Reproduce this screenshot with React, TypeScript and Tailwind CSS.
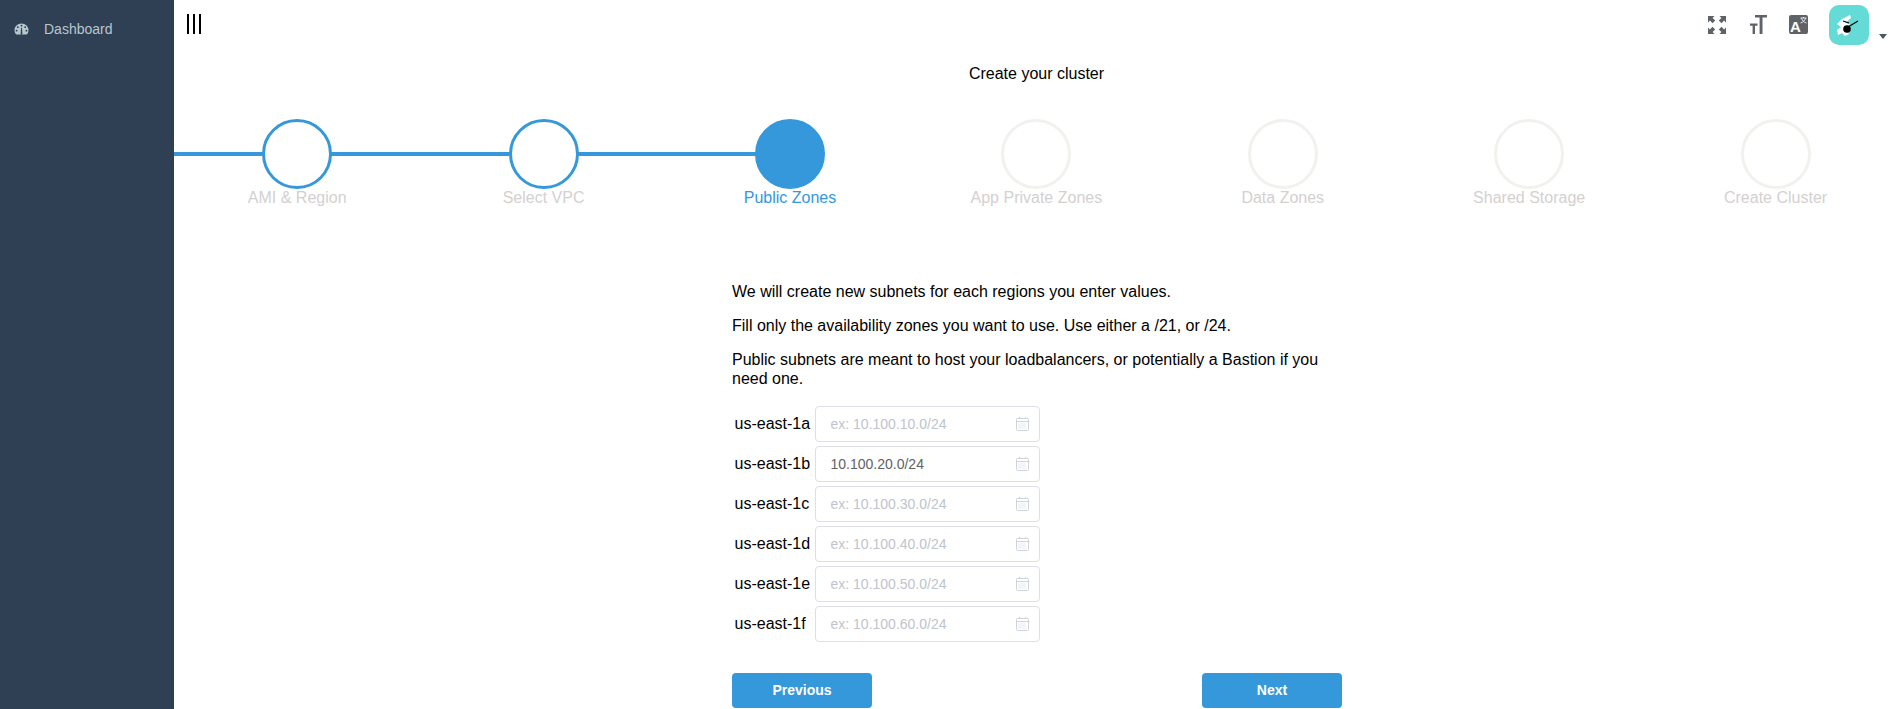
import React from 'react';

const steps = [
  { label: 'AMI & Region', state: 'done' },
  { label: 'Select VPC', state: 'done' },
  { label: 'Public Zones', state: 'active' },
  { label: 'App Private Zones', state: 'todo' },
  { label: 'Data Zones', state: 'todo' },
  { label: 'Shared Storage', state: 'todo' },
  { label: 'Create Cluster', state: 'todo' },
];

const zones = [
  { name: 'us-east-1a', placeholder: 'ex: 10.100.10.0/24', value: '' },
  { name: 'us-east-1b', placeholder: 'ex: 10.100.20.0/24', value: '10.100.20.0/24' },
  { name: 'us-east-1c', placeholder: 'ex: 10.100.30.0/24', value: '' },
  { name: 'us-east-1d', placeholder: 'ex: 10.100.40.0/24', value: '' },
  { name: 'us-east-1e', placeholder: 'ex: 10.100.50.0/24', value: '' },
  { name: 'us-east-1f', placeholder: 'ex: 10.100.60.0/24', value: '' },
];

function GaugeIcon() {
  return (
    <svg width="15" height="12" viewBox="0 0 15 12.5" preserveAspectRatio="none" className="fill-[#b8c7ce]">
      <path d="M7.5 0.5C3.5 0.5 0.5 3.6 0.5 7.5c0 1.5.4 2.8 1.2 4 .2.3.5.5.9.5h9.800c.4 0 .7-.2.9-.5.8-1.2 1.2-2.5 1.2-4 0-3.9-3-7-7-7z" />
      <circle cx="7.5" cy="2.8" r="0.9" fill="#2f4054" />
      <circle cx="3.8" cy="4.4" r="0.9" fill="#2f4054" />
      <circle cx="11.2" cy="4.4" r="0.9" fill="#2f4054" />
      <circle cx="2.6" cy="8" r="0.9" fill="#2f4054" />
      <circle cx="12.4" cy="8" r="0.9" fill="#2f4054" />
      <path d="M6.6 12l.4-7h1l.4 7z" fill="#2f4054" />
    </svg>
  );
}

function CalendarIcon() {
  return (
    <svg width="13" height="14" viewBox="0 0 13 14" fill="none" stroke="#cfd3dc" strokeWidth="1">
      <rect x="0.5" y="1.5" width="12" height="12" rx="1" />
      <path d="M0.5 4.5h12" />
      <path d="M3.5 0v2M9.5 0v2" />
      <path d="M2.5 7h8M2.5 9h8M2.5 11h8" strokeDasharray="1 1" />
    </svg>
  );
}

function FullscreenIcon() {
  return (
    <svg width="18" height="18" viewBox="0 0 18 18" className="fill-[#5f6368]">
      <path d="M0 0h6.5L4.6 1.9l2.6 2.6-2.7 2.7-2.6-2.6L0 6.5z" />
      <path d="M18 0h-6.5l1.9 1.9-2.6 2.6 2.7 2.7 2.6-2.6L18 6.5z" />
      <path d="M0 18h6.5l-1.9-1.9 2.6-2.6-2.7-2.7-2.6 2.6L0 11.5z" />
      <path d="M18 18h-6.5l1.9-1.9-2.6-2.6 2.7-2.7 2.6 2.6 1.9-1.9z" />
    </svg>
  );
}

function TextSizeIcon() {
  return (
    <svg width="17" height="19" viewBox="0 0 17 19" className="fill-[#5f6368]">
      <path d="M5 0h12v2.6h-4.5V19H9.600V2.600H5z" />
      <path d="M0 8.500h7.500v2.200H5V19H2.600v-8.300H0z" />
    </svg>
  );
}

function TranslateIcon() {
  return (
    <svg width="19" height="19" viewBox="0 0 19 19">
      <rect width="19" height="19" rx="2" fill="#5f6368" />
      <text x="1" y="17" fontSize="15" fontWeight="700" fill="#fff" fontFamily="Liberation Sans, sans-serif">A</text>
      <path d="M11.5 3h6M14.5 2v1M12.5 3c.5 2.5 2.5 4.5 5 5M16.5 3c-.5 2.5-2.5 4.5-5 5" stroke="#fff" strokeWidth="0.8" fill="none" />
    </svg>
  );
}

function AvatarLogo() {
  return (
    <svg width="40" height="40" viewBox="0 0 40 40">
      <path d="M21 10l-8 4-5 5 4 3-4 3 1 5 4-2 3 3 4-2-2-5 3-5-5-1 6-5z" fill="#fff" />
      <circle cx="18" cy="24" r="3.800" fill="#000" />
      <path d="M14 16l6 2M19 22l10-6" stroke="#000" strokeWidth="1.300" />
    </svg>
  );
}

function Step({ label, state }: { label: string; state: string }) {
  const circle =
    state === 'active'
      ? 'bg-[#3498db] border-[#3498db]'
      : state === 'done'
        ? 'bg-white border-[#3498db]'
        : 'bg-white border-[#f2f1ed]';
  return (
    <div className="relative flex w-[246.4px] shrink-0 flex-col items-center">
      <div className={`z-10 h-[70px] w-[70px] rounded-full border-[3px] ${circle}`} />
      <span className={`mt-[-1px] text-base leading-[20px] ${state === 'active' ? 'text-[#3498db]' : 'text-[#d4d0d0]'}`}>
        {label}
      </span>
    </div>
  );
}

export default function App() {
  return (
    <div className="flex h-[709px] overflow-hidden bg-white font-['Liberation_Sans',Arial,sans-serif] text-black">
      <aside className="w-[174px] shrink-0 bg-[#2f4054]">
        <div className="flex items-center pl-[14px] pt-[21px] text-[14px] leading-[16px] text-[#b8c7ce]">
          <GaugeIcon />
          <span className="ml-[15px]">Dashboard</span>
        </div>
      </aside>

      <main className="flex min-w-0 flex-1 flex-col">
        <header className="flex h-[55px] shrink-0 items-start justify-between">
          <div className="ml-[12.5px] mt-[14px] flex gap-[3.5px]">
            <span className="h-[20px] w-[2.5px] bg-black" />
            <span className="h-[20px] w-[2.5px] bg-black" />
            <span className="h-[20px] w-[2.5px] bg-black" />
          </div>
          <div className="flex items-start">
            <div className="mt-[16px]"><FullscreenIcon /></div>
            <div className="ml-[24px] mt-[15px]"><TextSizeIcon /></div>
            <div className="ml-[22px] mt-[15px]"><TranslateIcon /></div>
            <div className="ml-[21px] mt-[5px] h-[40px] w-[40px] rounded-[10px] bg-[#64dbd7]"><AvatarLogo /></div>
            <div className="ml-[10px] mr-[11px] mt-[34px] h-0 w-0 border-x-[4px] border-t-[5px] border-x-transparent border-t-[#4a5568]" />
          </div>
        </header>

        <h1 className="mt-[1px] pl-[1px] text-center text-base font-normal leading-[36px]">Create your cluster</h1>

        <div className="relative mt-[27px] flex">
          <div className="absolute left-0 top-[33px] h-[4px] w-[616px] bg-[#3498db]" />
          {steps.map((step) => (
            <Step key={step.label} label={step.label} state={step.state} />
          ))}
        </div>

        <section className="ml-[558px] mt-[75px] w-[610px]">
          <p className="mb-[16px] text-base leading-[18.4px]">We will create new subnets for each regions you enter values.</p>
          <p className="mb-[15.6px] text-base leading-[18.4px]">Fill only the availability zones you want to use. Use either a /21, or /24.</p>
          <p className="mb-[17.8px] text-base leading-[18.4px]">Public subnets are meant to host your loadbalancers, or potentially a Bastion if you need one.</p>

          <div className="flex flex-col gap-[4px]">
            {zones.map((zone) => (
              <div key={zone.name} className="flex items-center">
                <label className="w-[83px] pl-[2.5px] text-base">{zone.name}</label>
                <div className="flex h-[36px] w-[225px] items-center justify-between rounded-[4px] border border-[#dcdfe6] bg-white pl-[14.5px] pr-[10px] text-[14px]">
                  <span className={zone.value ? 'text-[#606266]' : 'text-[#c0c4cc]'}>{zone.value || zone.placeholder}</span>
                  <CalendarIcon />
                </div>
              </div>
            ))}
          </div>

          <div className="mt-[31px] flex justify-between">
            <button className="h-[35px] w-[140px] rounded-[4px] bg-[#3498db] text-[14px] font-bold text-white">Previous</button>
            <button className="h-[35px] w-[140px] rounded-[4px] bg-[#3498db] text-[14px] font-bold text-white">Next</button>
          </div>
        </section>
      </main>
    </div>
  );
}
